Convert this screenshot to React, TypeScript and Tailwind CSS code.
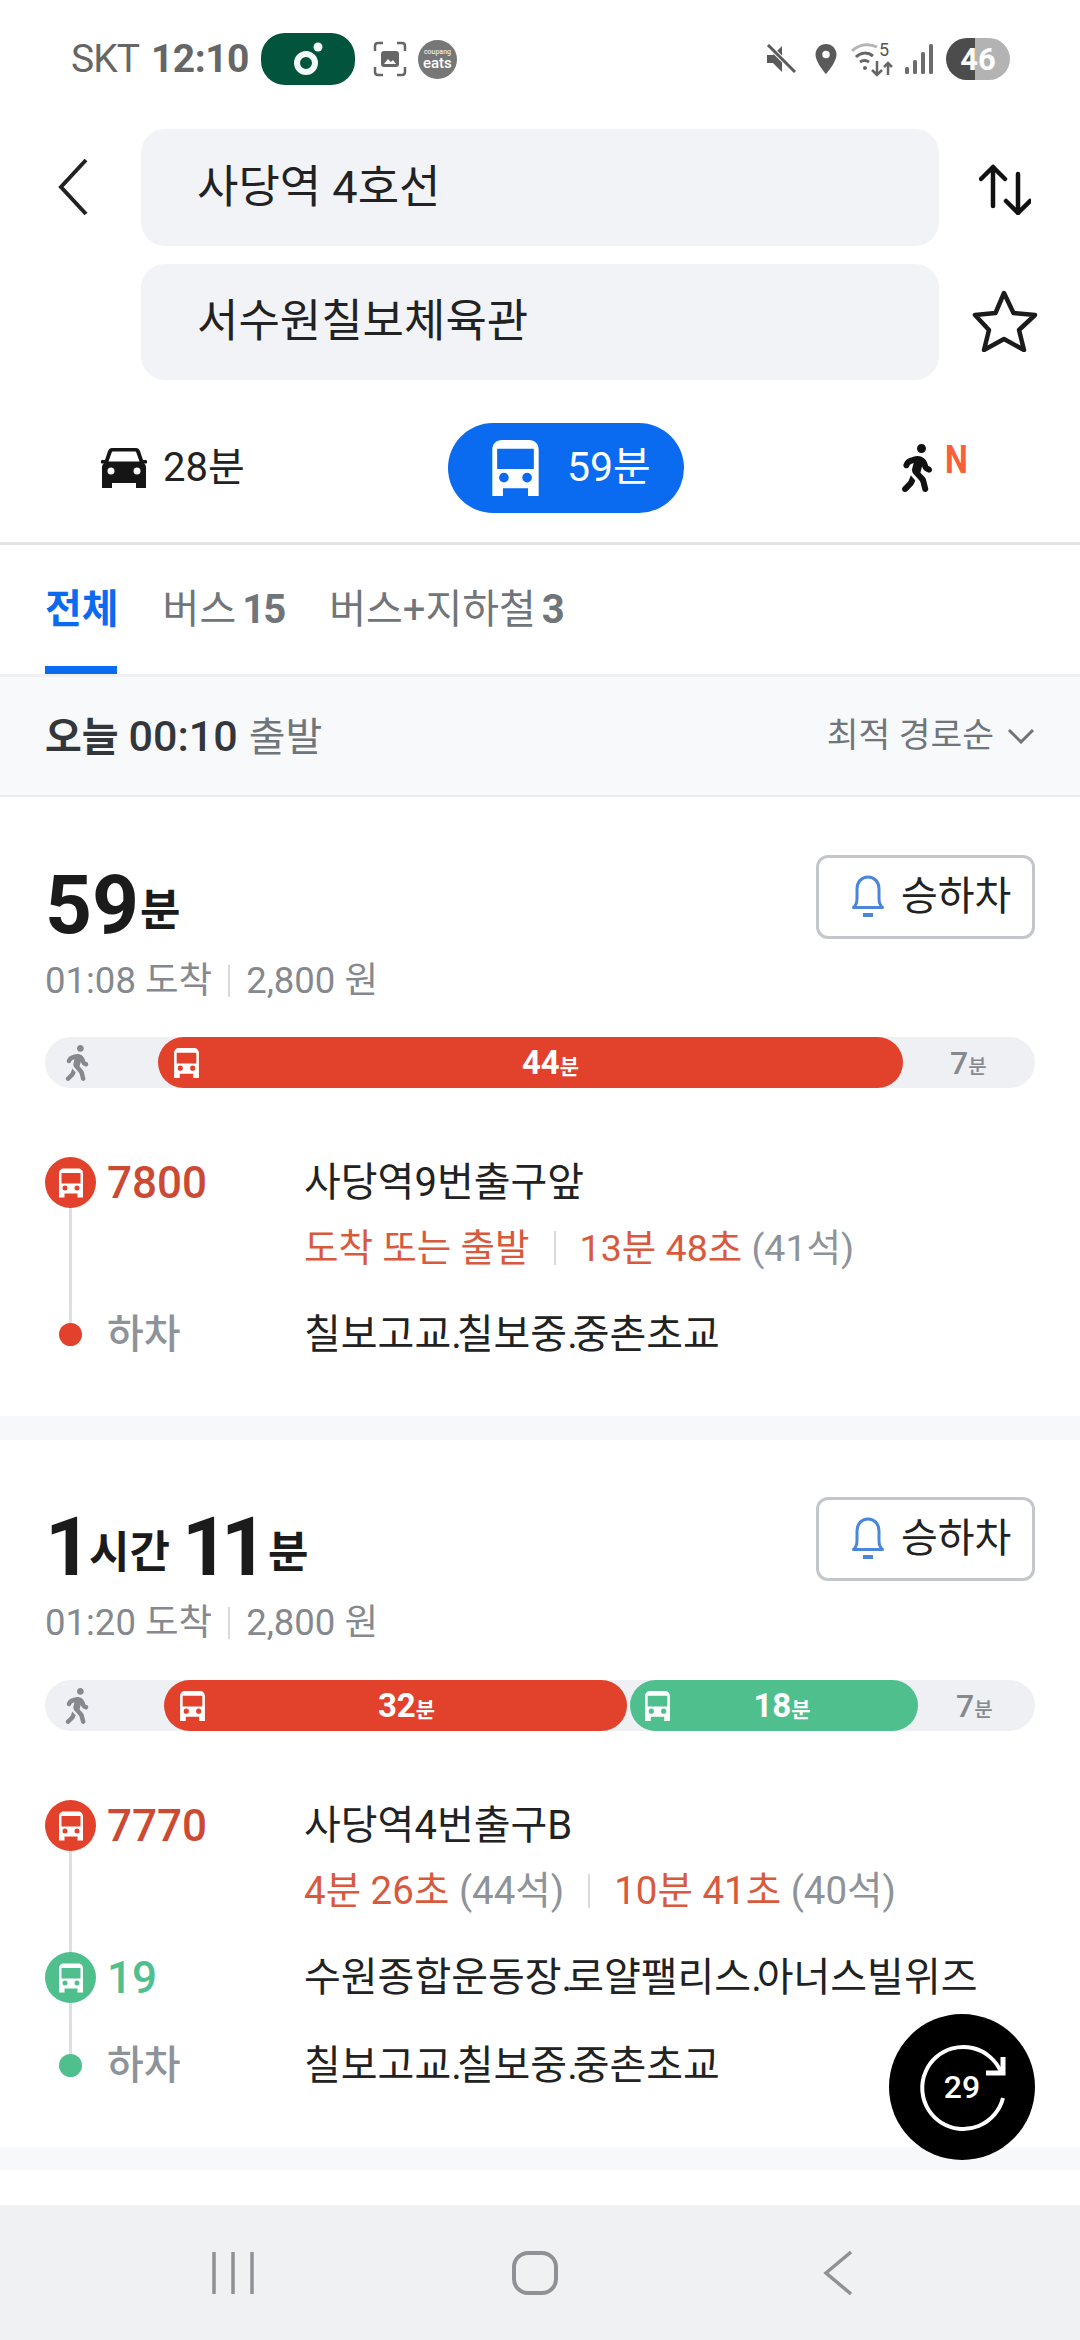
import React from 'react';
import { MdLocationOn } from 'react-icons/md';
import { FaWalking } from 'react-icons/fa';

const BusIcon = ({ className }: { className?: string }) => (
  <svg viewBox="0 0 48 58" className={className} fill="currentColor">
    <path
      fillRule="evenodd"
      d="M10 0h28c6 0 10 4 10 10v48H37v-8H11v8H0V10C0 4 4 0 10 0zM5 9v21h38V9H5zm7 25a5 5 0 1 0 0 10 5 5 0 0 0 0-10zm24 0a5 5 0 1 0 0 10 5 5 0 0 0 0-10z"
    />
  </svg>
);

const CarIcon = () => (
  <svg viewBox="0 0 46 40" className="w-[46px] h-[40px]" fill="#151515">
    <path
      fillRule="evenodd"
      d="M11 0h24c2 0 3 1 4 3l3 9h2.500a1.800 1.800 0 0 1 0 3.600H43c1.500 1 2 2 2 4V40H35v-5H11v5H1V19.600c0-2 .5-3 2-4H1.500a1.800 1.800 0 0 1 0-3.600H4l3-9c1-2 2-3 4-3zM12 3.500c-.8 0-1 .2-1.200.8L7.500 13.500h31l-3.300-9.200c-.2-.6-.4-.8-1.200-.8zM10 19.500a3.500 3.500 0 1 0 0 7 3.500 3.500 0 0 0 0-7zm26 0a3.500 3.500 0 1 0 0 7 3.500 3.500 0 0 0 0-7z"
    />
  </svg>
);

const BellIcon = () => (
  <svg viewBox="0 0 34 44" className="w-[34px] h-[44px]" fill="none" stroke="#4a86dc" strokeWidth="3">
    <path d="M2.500 32.500c3-2.500 3.500-5 3.500-9V14C6 7 10.500 2 17 2s11 5 11 12v9.500c0 4 .5 6.500 3.500 9z" strokeLinejoin="round" />
    <path d="M12 40h10" strokeWidth="4" />
  </svg>
);

const StatusBar = () => (
  <div className="h-[86px] pt-[33px] pl-[71px] pr-[70px] flex items-start justify-between text-[#666]">
    <div className="flex items-center h-[52px]">
      <span className="text-[39px] tracking-[-1px]">SKT</span>
      <span className="text-[39px] font-bold ml-[12px] tracking-[-0.5px]">12:10</span>
      <div className="ml-[12px] w-[94px] h-[52px] rounded-[24px] bg-[#03543c] flex items-center justify-center">
        <svg viewBox="0 0 40 40" className="w-[40px] h-[40px]">
          <circle cx="18" cy="24" r="9" fill="none" stroke="#f2fbf8" strokeWidth="6" />
          <circle cx="30" cy="8" r="4.500" fill="#f2fbf8" />
        </svg>
      </div>
      <svg viewBox="0 0 34 36" className="ml-[18px] w-[34px] h-[36px]" fill="none" stroke="#666" strokeWidth="2.500">
        <path d="M2 10V5q0-3 3-3h5M24 2h5q3 0 3 3v5M32 26v5q0 3-3 3h-5M10 34H5q-3 0-3-3v-5" />
        <rect x="8" y="10" width="18" height="16" rx="3" fill="#666" stroke="none" />
        <path d="M11 23l4-5 3 3 2-2 3 4z" fill="#fff" stroke="none" />
      </svg>
      <div className="ml-[11px] w-[39px] h-[39px] rounded-full bg-[#777] flex flex-col items-center justify-center text-white">
        <span className="text-[7px] leading-[8px]">coupang</span>
        <span className="text-[15px] leading-[15px] font-medium">eats</span>
      </div>
    </div>
    <div className="flex items-center h-[52px]">
      <svg viewBox="0 0 30 30" className="w-[30px] h-[30px]" fill="#5a5a5a">
        <path d="M1 11h6l9-9v26l-9-9H1z" />
        <path d="M2 1l27 27" stroke="#fff" strokeWidth="5" />
        <path d="M2 1l27 27" stroke="#5a5a5a" strokeWidth="3" />
      </svg>
      <MdLocationOn className="ml-[12px] w-[36px] h-[36px] text-[#5a5a5a]" />
      <svg viewBox="0 -6 44 42" className="ml-[7px] w-[44px] h-[42px] mt-[-6px]" fill="none" strokeWidth="3">
        <path d="M1 10C8 3 18 2 26 6" stroke="#b5b5b5" />
        <path d="M5 16c5-5 12-5 17-1" stroke="#666" />
        <path d="M9 21c3-2 6-2 9 0" stroke="#666" />
        <circle cx="14" cy="27" r="2" fill="#666" stroke="none" />
        <path d="M26 20v14M21 29l5 5 5-5M37 34V22M33 26l4-4 4 4" stroke="#666" strokeWidth="2.500" />
        <text x="28" y="15" fontSize="18" fill="#555" stroke="none" fontFamily="Roboto">5</text>
      </svg>
      <svg viewBox="0 0 28 30" className="ml-[10px] w-[28px] h-[30px]" fill="#6c6c6c">
        <rect x="0" y="23" width="4" height="7" rx="1.500" />
        <rect x="8" y="16" width="4" height="14" rx="1.500" />
        <rect x="16" y="8" width="4" height="22" rx="1.500" />
        <rect x="24" y="0" width="4" height="30" rx="1.500" />
      </svg>
      <div className="ml-[13px] w-[64px] h-[42px] rounded-full overflow-hidden relative flex">
        <div className="w-[29px] bg-[#4c4c4c]" />
        <div className="flex-1 bg-[#b3b3b3]" />
        <span className="absolute inset-0 flex items-center justify-center text-white font-bold text-[31px] leading-none">46</span>
      </div>
    </div>
  </div>
);

const SearchHeader = () => (
  <div className="pt-[43px] pl-[57px] flex items-start">
    <svg viewBox="0 0 32 58" className="mt-[29px] w-[32px] h-[58px]" fill="none" stroke="#222" strokeWidth="4">
      <path d="M29 2L4 29l25 27" />
    </svg>
    <div className="ml-[52px] w-[798px] flex flex-col gap-[18px]">
      <div className="h-[117px] rounded-[24px] bg-[#f1f3f6] pl-[56px] flex items-center text-[45px] text-[#222]">사당역 4호선</div>
      <div className="h-[116px] rounded-[24px] bg-[#f1f3f6] pl-[56px] flex items-center text-[45px] text-[#222]">서수원칠보체육관</div>
    </div>
    <div className="ml-[33px] w-[66px] flex flex-col items-center">
      <svg viewBox="0 0 52 51" className="mt-[35px] w-[52px] h-[51px]" fill="none" stroke="#111" strokeWidth="4.500" strokeLinejoin="round" strokeLinecap="round">
        <path d="M14 42V3M2 15L14 3l12 12M39 10v39M27 37l12 12 12-12" />
      </svg>
      <svg viewBox="0 0 66 62" className="mt-[75px] w-[66px] h-[62px]" fill="none" stroke="#1b1b1b" strokeWidth="4.500" strokeLinejoin="round">
        <path d="M32 3l9.500 20 21.500 2-16 15 5 20-20-11-20 11 5-20L3 25l20.500-2z" />
      </svg>
    </div>
  </div>
);

const ModeTabs = () => (
  <div className="h-[165px] border-b-[3px] border-[#e3e5e8] flex items-start pt-[43px]">
    <div className="ml-[101px] w-[347px] h-[90px] flex items-center">
      <CarIcon />
      <span className="ml-[16px] text-[40px] text-[#222]">28분</span>
    </div>
    <div className="w-[236px] h-[90px] rounded-full bg-[#0a6bf0] flex items-center pl-[44px] text-white">
      <BusIcon className="w-[47px] h-[56px]" />
      <span className="ml-[28px] text-[41px]">59분</span>
    </div>
    <div className="ml-[216px] h-[90px] flex items-center relative">
      <FaWalking className="w-[34px] h-[48px] text-[#111]" />
      <span className="absolute left-[45px] top-[18px] text-[38px] font-bold text-[#f9603a] leading-none origin-left scale-x-[0.85]">N</span>
    </div>
  </div>
);

const RouteTabs = () => (
  <div className="h-[132px] border-b-[3px] border-[#eef0f3] px-[45px] flex items-start text-[40px] text-[#70757a]">
    <div className="h-[129px] flex flex-col">
      <span className="h-[121px] pt-[8px] flex items-center font-bold text-[#0a6bf0] text-[40px]">전체</span>
      <span className="h-[8px] w-[72px] bg-[#0a6bf0]" />
    </div>
    <div className="ml-[44px] h-[121px] pt-[8px] flex items-center gap-[6px]">
      <span>버스</span>
      <span className="font-bold tracking-[-2px]">15</span>
    </div>
    <div className="ml-[45px] h-[121px] pt-[8px] flex items-center gap-[6px]">
      <span>버스+지하철</span>
      <span className="font-bold">3</span>
    </div>
  </div>
);

const TimeBar = () => (
  <div className="h-[120px] bg-[#f8f9fb] border-b-[2px] border-[#e9ebee] px-[45px] flex items-center justify-between">
    <div className="text-[40px]">
      <span className="font-bold text-[#33373c]">오늘 <span className="text-[43px] font-medium">00:10</span></span>
      <span className="ml-[11px] text-[#70757a]">출발</span>
    </div>
    <div className="flex items-center text-[34.500px] text-[#70757a]">
      <span>최적 경로순</span>
      <svg viewBox="0 0 28 16" className="ml-[13px] w-[28px] h-[16px]" fill="none" stroke="#70757a" strokeWidth="3">
        <path d="M2 2l12 12L26 2" />
      </svg>
    </div>
  </div>
);

const AlertButton = () => (
  <div className="w-[219px] h-[84px] rounded-[12px] border-[3px] border-[#c3c7cc] flex items-center pl-[32px] gap-[16px] text-[40px] text-[#222]">
    <BellIcon />
    <span>승하차</span>
  </div>
);

const Fare = ({ arrive }: { arrive: string }) => (
  <div className="h-[54px] flex items-center text-[36.500px] text-[#85898e]">
    <span>{arrive} 도착</span>
    <span className="mx-[16px] w-[2px] h-[32px] bg-[#d8dade]" />
    <span>2,800 원</span>
  </div>
);

const Marker = ({ color }: { color: string }) => (
  <div className={`w-[51px] h-[51px] rounded-full flex items-center justify-center text-white ${color}`}>
    <BusIcon className="w-[24px] h-[30px]" />
  </div>
);

const Dot = ({ color }: { color: string }) => (
  <div className="w-[51px] flex justify-center">
    <div className={`w-[23px] h-[23px] rounded-full ${color}`} />
  </div>
);

// 정류장명의 마침표는 폭이 좁게 보인다
const Stop = ({ name }: { name: string }) => (
  <span className="absolute left-[259px] text-[40px] text-[#222] whitespace-nowrap">
    {name.split('.').map((part, i) => (
      <React.Fragment key={i}>
        {i > 0 && <span className="tracking-[-5px]">.</span>}
        {part}
      </React.Fragment>
    ))}
  </span>
);

const Sep = () => <span className="mx-[24px] inline-block w-[2px] h-[34px] bg-[#d8dade]" />;

const Red = ({ children }: { children: React.ReactNode }) => <span className="text-[#d9593d]">{children}</span>;
const Seat = ({ children }: { children: React.ReactNode }) => <span className="text-[#8e9399]"> {children}</span>;

const Row = ({ left, label, labelClass, stop, className }: { left: React.ReactNode; label: string; labelClass: string; stop: string; className?: string }) => (
  <div className={`relative h-[51px] flex items-center ${className ?? ''}`}>
    <div className="relative">{left}</div>
    <span className={`ml-[11px] font-medium ${labelClass}`}>{label}</span>
    <Stop name={stop} />
  </div>
);

const WalkStart = () => <FaWalking className="w-[24px] h-[36px] text-[#85898e]" />;

const App = () => (
  <div className="relative w-[1080px] h-[2340px] overflow-hidden bg-white font-['Roboto','Noto_Sans_CJK_KR',sans-serif]">
    <StatusBar />
    <SearchHeader />
    <ModeTabs />
    <RouteTabs />
    <TimeBar />

    {/* 첫번째 경로 */}
    <div className="h-[619px] px-[45px] pt-[58px]">
      <div className="flex justify-between items-start">
        <div>
          <div className="h-[99px] pb-[3px] flex items-end text-[#1b1b1b] font-bold">
            <span className="text-[82px] leading-[92px]">59</span>
            <span className="ml-[1px] text-[44px] leading-[80px]">분</span>
          </div>
          <Fare arrive="01:08" />
        </div>
        <AlertButton />
      </div>
      <div className="mt-[29px] h-[51px] rounded-full bg-[#eef0f3] flex items-center">
        <div className="w-[113px] pl-[20px]">
          <WalkStart />
        </div>
        <div className="relative w-[745px] h-[51px] rounded-full bg-[#e2412b] flex items-center justify-center text-white font-bold text-[33px]">
          <BusIcon className="absolute left-[16px] w-[25px] h-[30px]" />
          <span className="ml-[40px]">44<span className="text-[21px]">분</span></span>
        </div>
        <div className="flex-1 pl-[47px] text-[32px] font-medium text-[#85898e]">7<span className="text-[20px]">분</span></div>
      </div>
      <div className="relative mt-[69px]">
        <div className="absolute left-[24px] top-[30px] w-[3px] h-[150px] bg-[#dcdfe3]" />
        <Row left={<Marker color="bg-[#e2412b]" />} label="7800" labelClass="text-[44px] text-[#cc4a33]" stop="사당역9번출구앞" />
        <div className="mt-[15px] h-[50px] ml-[259px] flex items-center text-[37.500px] whitespace-pre">
          <Red>도착 또는 출발</Red><Sep /><Red>13분 48초</Red><Seat>(41석)</Seat>
        </div>
        <Row className="mt-[36px]" left={<Dot color="bg-[#e2412b]" />} label="하차" labelClass="text-[40px] text-[#8e9399]" stop="칠보고교.칠보중.중촌초교" />
      </div>
    </div>

    <div className="h-[24px] bg-[#f7f8fa]" />

    {/* 두번째 경로 */}
    <div className="h-[707px] px-[45px] pt-[57px]">
      <div className="flex justify-between items-start">
        <div>
          <div className="h-[99px] pb-[3px] flex items-end text-[#1b1b1b] font-bold">
            <span className="text-[82px] leading-[92px]">1</span>
            <span className="ml-[-3px] text-[44px] leading-[80px]">시간</span>
            <span className="ml-[12px] text-[82px] leading-[92px] tracking-[-8px]">11</span>
            <span className="ml-[8px] text-[44px] leading-[80px]">분</span>
          </div>
          <Fare arrive="01:20" />
        </div>
        <AlertButton />
      </div>
      <div className="mt-[30px] h-[51px] rounded-full bg-[#eef0f3] flex items-center">
        <div className="w-[119px] pl-[20px]">
          <WalkStart />
        </div>
        <div className="relative w-[463px] h-[51px] rounded-full bg-[#e2412b] flex items-center justify-center text-white font-bold text-[33px]">
          <BusIcon className="absolute left-[16px] w-[25px] h-[30px]" />
          <span className="ml-[22px]">32<span className="text-[21px]">분</span></span>
        </div>
        <div className="relative ml-[3px] w-[288px] h-[51px] rounded-full bg-[#4fc08d] flex items-center justify-center text-white font-bold text-[33px]">
          <BusIcon className="absolute left-[15px] w-[25px] h-[30px]" />
          <span className="ml-[16px]">18<span className="text-[21px]">분</span></span>
        </div>
        <div className="flex-1 pl-[38px] text-[32px] font-medium text-[#85898e]">7<span className="text-[20px]">분</span></div>
      </div>
      <div className="relative mt-[69px]">
        <div className="absolute left-[24px] top-[30px] w-[3px] h-[235px] bg-[#dcdfe3]" />
        <Row left={<Marker color="bg-[#e2412b]" />} label="7770" labelClass="text-[44px] text-[#cc4a33]" stop="사당역4번출구B" />
        <div className="mt-[15px] h-[50px] ml-[259px] flex items-center text-[38.500px] whitespace-pre">
          <Red>4분 26초</Red><Seat>(44석)</Seat><Sep /><Red>10분 41초</Red><Seat>(40석)</Seat>
        </div>
        <Row className="mt-[36px]" left={<Marker color="bg-[#4fc08d]" />} label="19" labelClass="text-[44px] text-[#4fc08d]" stop="수원종합운동장.로얄팰리스.아너스빌위즈" />
        <Row className="mt-[37px]" left={<Dot color="bg-[#4fc08d]" />} label="하차" labelClass="text-[40px] text-[#8e9399]" stop="칠보고교.칠보중.중촌초교" />
      </div>
    </div>

    <div className="h-[23px] bg-[#f7f8fa]" />
    <div className="h-[35px] bg-white" />

    {/* 하단 내비게이션 */}
    <div className="h-[135px] bg-[#f0f1f3] flex items-center">
      <svg viewBox="0 0 42 44" className="ml-[212px] w-[42px] h-[44px]" fill="none" stroke="#8e9195" strokeWidth="3.500">
        <path d="M2 1v42M21 1v42M40 1v42" />
      </svg>
      <svg viewBox="0 0 46 44" className="ml-[258px] w-[46px] h-[44px]" fill="none" stroke="#8e9195" strokeWidth="4">
        <rect x="2" y="2" width="42" height="40" rx="14" />
      </svg>
      <svg viewBox="0 0 30 46" className="ml-[265px] w-[30px] h-[46px]" fill="none" stroke="#8e9195" strokeWidth="3.500">
        <path d="M28 2L3 23l25 21" />
      </svg>
    </div>

    {/* 떠있는 새로고침 버튼 */}
    <div className="absolute left-[889px] top-[2014px] w-[146px] h-[146px] rounded-full bg-black flex items-center justify-center text-white">
      <svg viewBox="0 0 146 146" className="absolute inset-0 w-[146px] h-[146px]" fill="none" stroke="#fff" strokeWidth="4">
        <path d="M114 84a41 41 0 1 1-2-26" />
        <path d="M114 43v16H97" strokeWidth="5" />
      </svg>
      <span className="text-[32px] font-medium">29</span>
    </div>
  </div>
);

export default App;
